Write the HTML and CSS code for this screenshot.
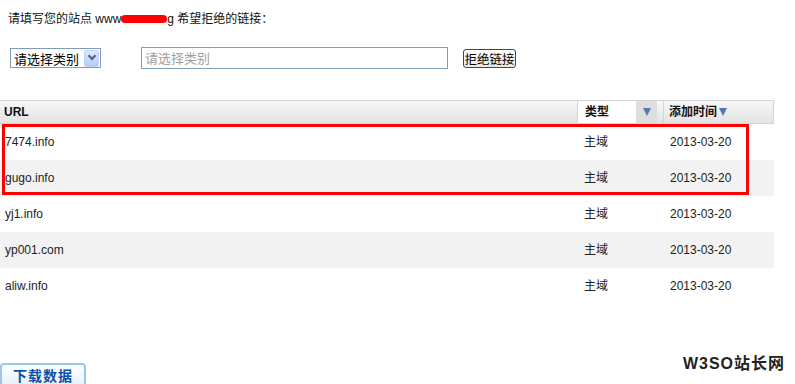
FILE: index.html
```html
<!DOCTYPE html>
<html>
<head>
<meta charset="utf-8">
<title>拒绝链接</title>
<link rel="stylesheet" href="styles.css">
</head>
<body>
    <div class="intro">请填写您的站点 www<span class="blot"></span>g 希望拒绝的链接：</div>

    <div class="filter">
        <div class="fake-select">
            <span class="fs-text">请选择类别</span>
            <span class="fs-arrow"><span class="chev"></span></span>
        </div>
        <input class="cat-input" type="text" placeholder="请选择类别">
        <button class="btn-reject">拒绝链接</button>
    </div>

    <div class="grid-wrap">
        <div class="grid head">
            <div class="th c-url">URL</div>
            <div class="th c-type">类型</div>
            <div class="th c-sort"><span class="sort-box"><span class="tri"></span></span></div>
            <div class="th c-date">添加时间<span class="tri"></span></div>
        </div>
        <div class="grid row">
            <div class="td c-url">7474.info</div>
            <div class="td c-type2">主域</div>
            <div class="td c-date">2013-03-20</div>
        </div>
        <div class="grid row alt">
            <div class="td c-url">gugo.info</div>
            <div class="td c-type2">主域</div>
            <div class="td c-date">2013-03-20</div>
        </div>
        <div class="grid row">
            <div class="td c-url">yj1.info</div>
            <div class="td c-type2">主域</div>
            <div class="td c-date">2013-03-20</div>
        </div>
        <div class="grid row alt">
            <div class="td c-url">yp001.com</div>
            <div class="td c-type2">主域</div>
            <div class="td c-date">2013-03-20</div>
        </div>
        <div class="grid row">
            <div class="td c-url">aliw.info</div>
            <div class="td c-type2">主域</div>
            <div class="td c-date">2013-03-20</div>
        </div>
        <div class="mark"></div>
    </div>

    <button class="btn-download">下载数据</button>

    <div class="watermark">W3SO站长网</div>
</body>
</html>
```

FILE: styles.css
```css
html, body {
    margin: 0;
    padding: 0;
    height: 100%;
    overflow: hidden;
}
body {
    position: relative;
    background: #fff;
    color: #222;
    font-family: "Liberation Sans", "Noto Sans CJK SC", Arial, sans-serif;
    font-size: 12px;
}

.intro {
    padding: 11px 0 0 8px;
    height: 16px;
    line-height: 16px;
    color: #111;
}
.blot {
    display: inline-block;
    width: 46px;
    height: 8px;
    margin-bottom: 1px;
    vertical-align: middle;
    background: #f00;
    border-radius: 4px;
}

.filter {
    display: flex;
    align-items: center;
    height: 24px;
    margin-top: 19px;
    padding-left: 10px;
}
.fake-select {
    box-sizing: border-box;
    display: flex;
    align-items: center;
    justify-content: space-between;
    width: 91px;
    height: 20px;
    border: 1px solid #7f9db9;
    padding: 0 0 0 3px;
    font-size: 13px;
    color: #000;
}
.fs-arrow {
    display: flex;
    align-items: center;
    justify-content: center;
    width: 15px;
    height: 17px;
    margin-right: 1px;
    background: linear-gradient(#dde8fc, #b6cbf5);
    border: 1px solid #c3d3fd;
    box-sizing: border-box;
    border-radius: 2px;
}
.chev {
    width: 4px;
    height: 4px;
    border-right: 2px solid #4d6185;
    border-bottom: 2px solid #4d6185;
    transform: translateY(-2px) rotate(45deg);
}
.cat-input {
    box-sizing: border-box;
    width: 307px;
    height: 22px;
    margin: 0 0 0 40px;
    padding: 0 3px;
    border: 1px solid #7f9db9;
    font-family: "Liberation Sans", "Noto Sans CJK SC", sans-serif;
    font-size: 13px;
    outline: none;
}
.cat-input::placeholder {
    color: #a0a0a0;
}
.btn-reject {
    box-sizing: border-box;
    width: 53px;
    height: 19px;
    margin-left: 15px;
    padding: 0;
    border: 1px solid #1c4f8a;
    border-radius: 3px;
    background: linear-gradient(#ffffff, #ece9df);
    font-family: "Noto Sans CJK SC", sans-serif;
    font-size: 12.5px;
    line-height: 17px;
    white-space: nowrap;
    overflow: hidden;
    color: #000;
}

.grid-wrap {
    position: relative;
    width: 774px;
    margin-top: 30px;
}
.grid {
    display: grid;
    grid-template-columns: 577px 59px 27px 111px;
    align-items: center;
}
.head {
    height: 24px;
    box-sizing: border-box;
    border-top: 1px solid #d4d4d4;
    border-bottom: 1px solid #d4d4d4;
    background: linear-gradient(#f7f7f7, #e3e3e3);
    font-weight: bold;
    color: #111;
}
.th {
    height: 22px;
    line-height: 22px;
    box-sizing: border-box;
}
.head .c-url {
    padding-left: 4px;
}
.head .c-type {
    border-left: 1px solid #d4d4d4;
    background: #fff;
    padding-left: 7px;
}
.c-sort {
    display: flex;
    align-items: center;
}
.sort-box {
    display: flex;
    align-items: center;
    justify-content: center;
    width: 21px;
    height: 22px;
    background: #dedede;
}
.head .c-date {
    border-left: 1px solid #d4d4d4;
    border-right: 1px solid #d4d4d4;
    padding-left: 5px;
    display: flex;
    align-items: center;
    gap: 2px;
}
.tri {
    display: inline-block;
    width: 0;
    height: 0;
    border-left: 4px solid transparent;
    border-right: 4px solid transparent;
    border-top: 8px solid #5878ad;
}

.row {
    height: 36px;
    color: #222;
}
.row.alt {
    background: #f2f2f2;
}
.td {
    line-height: 36px;
}
.row .c-url {
    padding-left: 5px;
}
.c-type2 {
    grid-column: 2 / 4;
    padding-left: 7px;
}
.row .c-date {
    padding-left: 7px;
}

.mark {
    position: absolute;
    left: 2px;
    top: 24px;
    width: 747px;
    height: 71px;
    box-sizing: border-box;
    border: 3px solid #f00;
}

.btn-download {
    display: block;
    box-sizing: border-box;
    width: 86px;
    height: 26px;
    margin-top: 59px;
    padding: 0 0 3px;
    border: 2px solid #9cc5ec;
    border-radius: 4px;
    background: linear-gradient(#ffffff, #e4effa);
    font-family: "Noto Sans CJK SC", sans-serif;
    font-size: 14px;
    font-weight: bold;
    color: #0b4fa8;
    letter-spacing: 1px;
}

.watermark {
    position: absolute;
    right: 10px;
    top: 350px;
    font-family: "Liberation Sans", "Noto Sans CJK SC", sans-serif;
    font-size: 16px;
    font-weight: bold;
    color: #222;
    letter-spacing: 1px;
}
```
